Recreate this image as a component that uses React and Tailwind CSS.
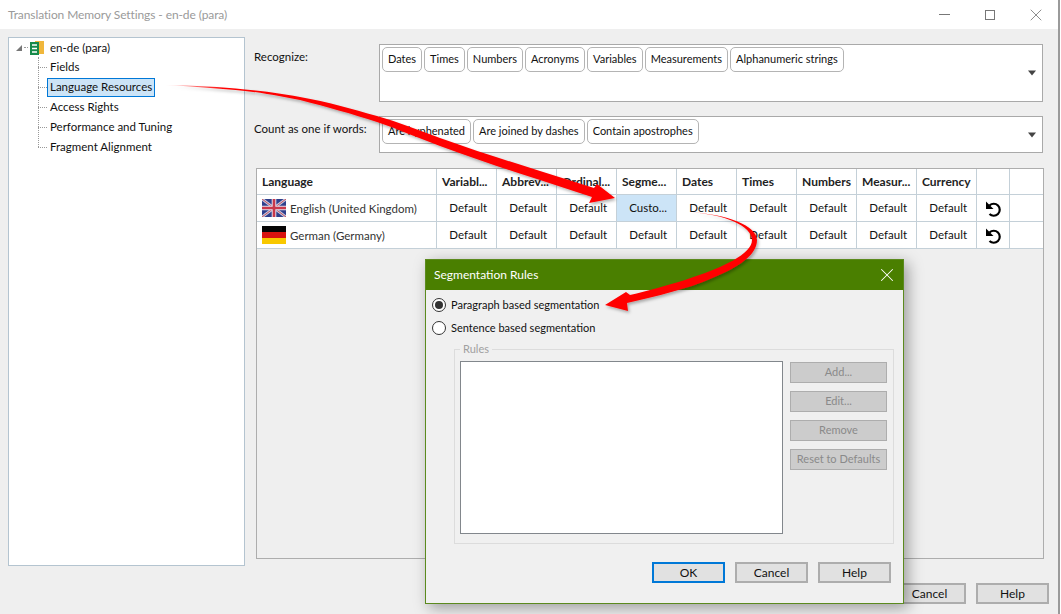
import React from "react";
import { X } from "lucide-react";

const recognize = ["Dates", "Times", "Numbers", "Acronyms", "Variables", "Measurements", "Alphanumeric strings"];
const countAs = ["Are hyphenated", "Are joined by dashes", "Contain apostrophes"];
const treeItems = ["Fields", "Language Resources", "Access Rights", "Performance and Tuning", "Fragment Alignment"];
const columns = ["Variabl...", "Abbrev...", "Ordinal...", "Segme...", "Dates", "Times", "Numbers", "Measur...", "Currency"];

const Tag = ({ children }) => (
  <span className="h-[25px] px-[5px] flex items-center border border-[#b4b4b4] rounded-[5px] bg-white whitespace-nowrap text-[11px]">
    {children}
  </span>
);

const TokenBox = ({ items, height }) => (
  <div className={`flex-1 relative border border-[#a9a9a9] bg-white p-[2px] ${height}`}>
    <div className="flex gap-[2px]">
      {items.map((t) => (
        <Tag key={t}>{t}</Tag>
      ))}
    </div>
    <span className="absolute right-[6px] top-1/2 -translate-y-1/2 w-0 h-0 border-l-[4px] border-r-[4px] border-t-[5px] border-l-transparent border-r-transparent border-t-[#444]" />
  </div>
);

const Btn = ({ children, className = "" }) => (
  <button className={`w-[73px] h-[21px] border-2 border-[#adadad] bg-[#e1e1e1] text-[#111] text-[12px] flex items-center justify-center ${className}`}>
    {children}
  </button>
);

const DisabledBtn = ({ children }) => (
  <button className="w-[97px] h-[21px] border border-[#adadad] bg-[#cccccc] text-[#8a8a8a] flex items-center justify-center whitespace-nowrap">
    {children}
  </button>
);

const UkFlag = () => (
  <svg width="24" height="18" viewBox="0 0 24 18" className="shrink-0">
    <rect width="24" height="18" fill="#2f3f8c" />
    <path d="M0 0L24 18M24 0L0 18" stroke="#c4c8e0" strokeWidth="2.8" />
    <path d="M0 0L24 18M24 0L0 18" stroke="#c8525f" strokeWidth="1" />
    <path d="M12 0V18M0 9H24" stroke="#e0e0f0" strokeWidth="4.6" />
    <path d="M12 0V18M0 9H24" stroke="#c9384a" strokeWidth="2.6" />
  </svg>
);

const DeFlag = () => (
  <svg width="24" height="18" viewBox="0 0 24 18" className="shrink-0">
    <rect width="24" height="6" fill="#050505" />
    <rect y="6" width="24" height="6" fill="#d8130f" />
    <rect y="12" width="24" height="6" fill="#f8c800" />
  </svg>
);

const UndoIcon = () => (
  <svg width="18" height="18" viewBox="0 0 18 18" fill="none" className="mb-[1px]">
    <path d="M5.5 6.5A6 6 0 1 1 5.5 15" stroke="#000" strokeWidth="2.2" />
    <path d="M2 2.5V10H9.5Z" fill="#000" />
  </svg>
);

const Row = ({ flag, name, active }) => (
  <div className="flex h-[27px] border-b border-[#c4d0d8] bg-white text-[11.5px]">
    <div className="w-[180px] flex items-center gap-[4px] pl-[5px] border-r border-[#c4d0d8] text-[#333]">
      {flag}
      <span className="mt-[1px]">{name}</span>
    </div>
    {columns.map((c, i) => (
      <div
        key={c}
        className={`w-[60px] flex items-center justify-end pr-[9px] border-r border-[#c4d0d8] ${i === 3 && active ? "bg-[#cce4f7]" : ""}`}
      >
        {i === 3 && active ? "Custo..." : "Default"}
      </div>
    ))}
    <div className="w-[33px] flex items-center justify-center border-r border-[#c4d0d8]">
      <UndoIcon />
    </div>
    <div className="flex-1" />
  </div>
);

const SegmentationDialog = () => (
  <div className="absolute left-[425px] top-[259px] w-[479px] h-[345px] flex flex-col bg-[#f0f0f0] border border-[#5b8a1e] text-[11px] shadow-[4px_4px_14px_rgba(0,0,0,0.35)]">
    <div className="h-[30px] shrink-0 bg-[#4a7f00] text-white flex items-center justify-between pl-[8px] pr-[5px] text-[12px]">
      <span>Segmentation Rules</span>
      <X size={22} strokeWidth={1.1} />
    </div>
    <div className="flex flex-col pl-[6px] pr-[9px] pt-[7px]">
      <div className="flex items-center gap-[5px] h-[16px]">
        <span className="w-[14px] h-[14px] rounded-full border border-[#333] bg-white flex items-center justify-center">
          <span className="w-[8px] h-[8px] rounded-full bg-[#333]" />
        </span>
        <span>Paragraph based segmentation</span>
      </div>
      <div className="flex items-center gap-[5px] h-[16px] mt-[7px]">
        <span className="w-[14px] h-[14px] rounded-full border border-[#333] bg-white" />
        <span>Sentence based segmentation</span>
      </div>
      <fieldset className="ml-[22px] mt-[5px] h-[203px] border border-[#dcdcdc] pl-[5px] pr-[6px] pt-[3px] flex">
        <legend className="ml-0 px-[3px] text-[#a0a0a0]">Rules</legend>
        <div className="flex gap-[7px]">
          <div className="w-[323px] h-[173px] border border-[#82878c] bg-white" />
          <div className="flex flex-col gap-[8px] pt-[1px]">
            <DisabledBtn>Add...</DisabledBtn>
            <DisabledBtn>Edit...</DisabledBtn>
            <DisabledBtn>Remove</DisabledBtn>
            <DisabledBtn>Reset to Defaults</DisabledBtn>
          </div>
        </div>
      </fieldset>
      <div className="flex justify-end gap-[10px] mt-[18px] pr-[3px]">
        <Btn className="!border-[#0078d7]">OK</Btn>
        <Btn>Cancel</Btn>
        <Btn>Help</Btn>
      </div>
    </div>
  </div>
);

const Arrows = () => (
  <svg width="1061" height="614" viewBox="0 0 1061 614" className="absolute left-0 top-0 pointer-events-none">
    <defs>
      <filter id="arrowShadow" x="-10%" y="-10%" width="120%" height="130%">
        <feDropShadow dx="1.5" dy="2" stdDeviation="1.5" floodColor="#000" floodOpacity="0.3" />
      </filter>
      <linearGradient id="fadeIn" x1="165" y1="85" x2="225" y2="88" gradientUnits="userSpaceOnUse">
        <stop offset="0" stopColor="#ff0000" stopOpacity="0.1" />
        <stop offset="1" stopColor="#ff0000" />
      </linearGradient>
    </defs>
    <g filter="url(#arrowShadow)">
      <path
        d="M165 85C195 85.5 220 87 245 89.5C265 91 282 94 300 97C328 102 352 109 377 116C398 122 418 130 440 138C473 150 505 160 540 171L594 188L597 184L615 198L589 203L592 197L540 180C505 169 473 158 440 146C418 138 398 129 377 122C352 114 328 107 300 100C282 97 265 93 245 91C220 88.5 195 86.5 165 85Z"
        fill="url(#fadeIn)"
      />
      <path
        d="M688 212C725 214 752 226 752 240C752 256 715 270 685 280C665 286 648 291 630 295L626 292L605 305L628 311L627 303C650 298 672 292 692 286C725 274 757 260 757 240C757 226 728 214 688 212Z"
        fill="#ff0000"
      />
    </g>
  </svg>
);

export default function App() {
  return (
    <div className="relative w-[1061px] h-[614px] overflow-hidden bg-white text-[12px] text-[#111] font-['Lato',sans-serif]">
      <div className="w-[1060px] h-full flex flex-col bg-[#efefef] border-r-2 border-[#9a9a9a]">
        <div className="h-[29px] shrink-0 bg-white flex items-center justify-between pl-[8px] text-[12px] tracking-[-0.1px] text-[#9a9a9a]">
          <span>Translation Memory Settings - en-de (para)</span>
          <div className="flex items-center text-[#777] mr-[-1px]">
            <span className="w-[46px] flex justify-center"><span className="w-[11px] border-t border-[#777]" /></span>
            <span className="w-[46px] flex justify-center"><span className="w-[10px] h-[10px] border border-[#777]" /></span>
            <span className="w-[46px] flex justify-center"><X size={20} strokeWidth={1} /></span>
          </div>
        </div>

        <div className="flex flex-1 pl-[8px] pt-[8px]">
          <div className="w-[237px] h-[529px] border border-[#b4c4d0] bg-white relative text-[11.5px]">
            <div className="flex items-center h-[19px] pl-[7px] gap-[2px]">
              <span className="w-0 h-0 border-l-[6px] border-b-[6px] border-l-transparent border-b-[#777]" />
              <span className="w-[4px] border-t border-dotted border-[#999]" />
              <svg width="14" height="14" viewBox="0 0 14 14" className="shrink-0">
                <rect x="5" y="0" width="9" height="13" fill="#f0b73c" />
                <rect x="0" y="1" width="9" height="13" fill="#168a4a" />
                <path d="M2 4H7M2 7.5H7M2 11H7" stroke="#fff" strokeWidth="1.4" />
              </svg>
              <span className="ml-[4px]">en-de (para)</span>
            </div>
            <div className="left-[29px] border-l border-dotted border-[#999] h-[90px] absolute top-[19px]" />
            {treeItems.map((t) => (
              <div key={t} className="flex items-center h-[20px] pl-[29px]">
                <span className="w-[9px] border-t border-dotted border-[#999]" />
                <span className={`h-[19px] pl-[2px] pr-[2px] flex items-center border ${t === "Language Resources" ? "bg-[#cce4f7] border-[#0078d7]" : "border-transparent"}`}>
                  {t}
                </span>
              </div>
            ))}
          </div>

          <div className="flex flex-col ml-[9px] w-[789px]">
            <div className="flex h-[58px] mt-[7px] text-[11.5px]">
              <div className="w-[125px] pt-[4px]">Recognize:</div>
              <TokenBox items={recognize} height="h-[58px]" />
            </div>
            <div className="flex h-[37px] mt-[14px] text-[11.5px]">
              <div className="w-[125px] pt-[4px] whitespace-nowrap">Count as one if words:</div>
              <TokenBox items={countAs} height="h-[37px]" />
            </div>
            <div className="h-[391px] w-[788px] ml-[2px] mt-[15px] border border-[#adadad] bg-[#efefef] flex flex-col">
              <div className="flex h-[26px] border-b border-[#c4d0d8] bg-white font-bold text-[#222]">
                <div className="w-[180px] flex items-center pl-[5px] border-r border-[#c4d0d8]">Language</div>
                {columns.map((c) => (
                  <div key={c} className="w-[60px] flex items-center pl-[5px] border-r border-[#c4d0d8] whitespace-nowrap overflow-hidden">
                    {c}
                  </div>
                ))}
                <div className="w-[33px] border-r border-[#c4d0d8]" />
                <div className="flex-1" />
              </div>
              <Row flag={<UkFlag />} name="English (United Kingdom)" active />
              <Row flag={<DeFlag />} name="German (Germany)" />
            </div>
            <div className="flex justify-end gap-[10px] mt-[24px] mr-[-6px]">
              <Btn>OK</Btn>
              <Btn>Cancel</Btn>
              <Btn>Help</Btn>
            </div>
          </div>
        </div>
      </div>
      <SegmentationDialog />
      <Arrows />
    </div>
  );
}
